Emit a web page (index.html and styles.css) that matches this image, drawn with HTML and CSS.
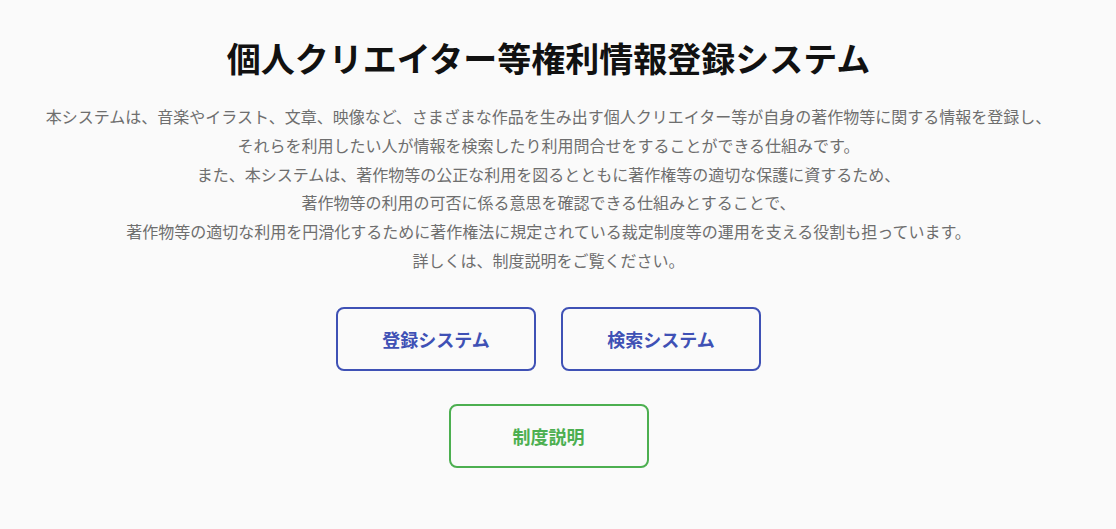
FILE: index.html
```html
<!DOCTYPE html>
<html lang="ja">
<head>
<meta charset="utf-8">
<link rel="stylesheet" href="styles.css">
</head>
<body>
<main class="page">
  <h1 class="title">個人クリエイター等権利情報登録システム</h1>
  <p class="intro">本システムは、音楽やイラスト、文章、映像など、さまざまな作品を生み出す個人クリエイター等が自身の著作物等に関する情報を登録し、<br>それらを利用したい人が情報を検索したり利用問合せをすることができる仕組みです。<br>また、本システムは、著作物等の公正な利用を図るとともに著作権等の適切な保護に資するため、<br>著作物等の利用の可否に係る意思を確認できる仕組みとすることで、<br>著作物等の適切な利用を円滑化するために著作権法に規定されている裁定制度等の運用を支える役割も担っています。<br>詳しくは、制度説明をご覧ください。</p>
  <div class="buttons">
    <div class="row">
      <a class="btn btn-blue" href="#">登録システム</a>
      <a class="btn btn-blue" href="#">検索システム</a>
    </div>
    <div class="row">
      <a class="btn btn-green" href="#">制度説明</a>
    </div>
  </div>
</main>
</body>
</html>
```
FILE: styles.css
```css
html, body {
  margin: 0;
  padding: 0;
  background: #fafafa;
}
body {
  font-family: "Noto Sans CJK JP", "Noto Sans", sans-serif;
}
.page {
  width: 1097px;
  display: flex;
  flex-direction: column;
  align-items: center;
  padding-top: 32px;
}
.title {
  margin: 0;
  font-size: 34px;
  line-height: 52px;
  font-weight: 700;
  color: #111;
}
.intro {
  margin: 18px 0 0;
  font-size: 16px;
  line-height: 28.8px;
  color: #6e6e6e;
  text-align: center;
}
.buttons {
  margin-top: 32px;
  display: flex;
  flex-direction: column;
  align-items: center;
  gap: 33px;
}
.row {
  display: flex;
  gap: 25px;
}
.btn {
  box-sizing: border-box;
  width: 200px;
  height: 64px;
  border: 2px solid;
  border-radius: 8px;
  display: flex;
  align-items: center;
  justify-content: center;
  text-decoration: none;
  font-size: 18px;
  font-weight: 700;
}
.btn-blue {
  border-color: #3f51b5;
  color: #3f51b5;
}
.btn-green {
  border-color: #4caf50;
  color: #4caf50;
}
```
